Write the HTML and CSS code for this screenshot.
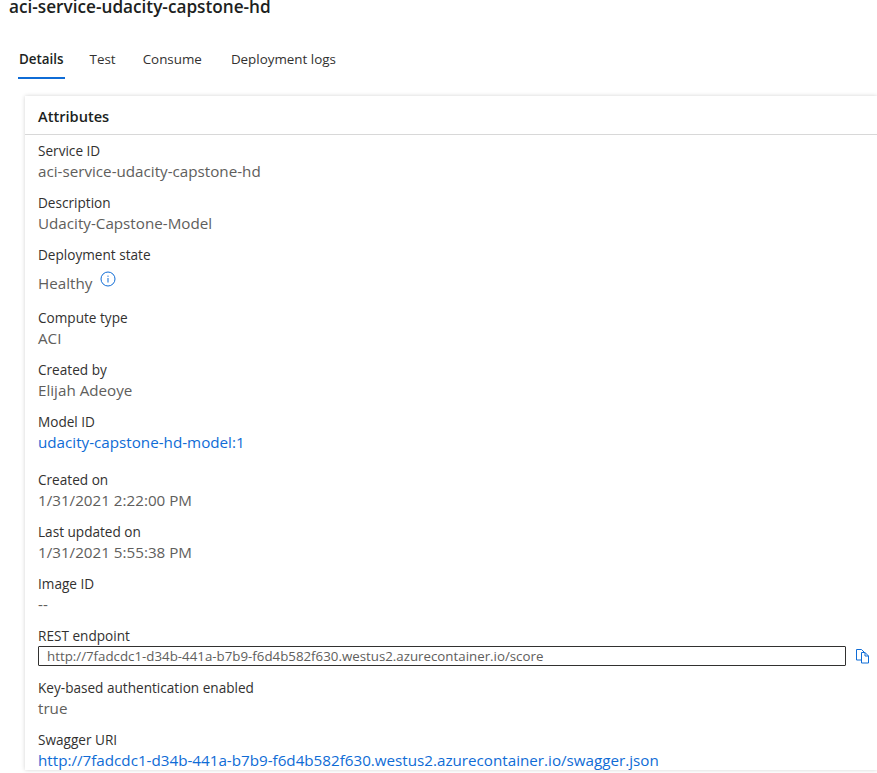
FILE: index.html
```html
<!DOCTYPE html>
<html lang="en">

<head>
    <meta charset="UTF-8">
    <meta name="viewport" content="width=device-width, initial-scale=1.0">
    <title>aci-service-udacity-capstone-hd</title>
    <link rel="stylesheet" href="styles.css">
</head>

<body>
    <h1 class="title">aci-service-udacity-capstone-hd</h1>

    <div class="tabs">
        <a class="tab active">Details</a>
        <a class="tab tab-test">Test</a>
        <a class="tab tab-consume">Consume</a>
        <a class="tab">Deployment logs</a>
    </div>

    <div class="card">
        <div class="card-header">Attributes</div>
        <div class="card-body">
            <div class="field">
                <div class="label">Service ID</div>
                <div class="value">aci-service-udacity-capstone-hd</div>
            </div>
            <div class="field">
                <div class="label">Description</div>
                <div class="value">Udacity-Capstone-Model</div>
            </div>
            <div class="field field-state">
                <div class="label">Deployment state</div>
                <div class="value value-state">
                    Healthy
                    <svg class="info-icon" width="16" height="16" viewBox="0 0 16 16">
                        <circle cx="8" cy="8" r="7" fill="none" stroke="#0f6cd6" stroke-width="1"/>
                        <rect x="7.5" y="7" width="1" height="4.5" fill="#0f6cd6"/>
                        <rect x="7.5" y="4.6" width="1" height="1.2" fill="#0f6cd6"/>
                    </svg>
                </div>
            </div>
            <div class="field">
                <div class="label">Compute type</div>
                <div class="value">ACI</div>
            </div>
            <div class="field">
                <div class="label">Created by</div>
                <div class="value">Elijah Adeoye</div>
            </div>
            <div class="field field-model">
                <div class="label">Model ID</div>
                <div class="value"><a class="link">udacity-capstone-hd-model:1</a></div>
            </div>
            <div class="field">
                <div class="label">Created on</div>
                <div class="value">1/31/2021 2:22:00 PM</div>
            </div>
            <div class="field">
                <div class="label">Last updated on</div>
                <div class="value">1/31/2021 5:55:38 PM</div>
            </div>
            <div class="field">
                <div class="label">Image ID</div>
                <div class="value">--</div>
            </div>
            <div class="field">
                <div class="label">REST endpoint</div>
                <div class="endpoint">
                    <div class="endpoint-box">http://7fadcdc1-d34b-441a-b7b9-f6d4b582f630.westus2.azurecontainer.io/score</div>
                    <svg class="copy-icon" width="16" height="16" viewBox="0 0 16 16" fill="#fff" stroke="#0f6cd6" stroke-width="1">
                        <path d="M1.500 1.500h5l2.500 2.500v8h-7.500z"/>
                        <path d="M6.500 4.500h3.500l3.500 3.500v7h-7z"/>
                        <path d="M10 4.500v3.500h3.500" fill="none"/>
                    </svg>
                </div>
            </div>
            <div class="field">
                <div class="label">Key-based authentication enabled</div>
                <div class="value">true</div>
            </div>
            <div class="field">
                <div class="label">Swagger URI</div>
                <div class="value"><a class="link">http://7fadcdc1-d34b-441a-b7b9-f6d4b582f630.westus2.azurecontainer.io/swagger.json</a></div>
            </div>
        </div>
    </div>
</body>

</html>
```

FILE: styles.css
```css
html, body {
    height: 773px;
    overflow: hidden;
}

body {
    margin: 0;
    padding: 0;
    background: #fff;
    color: #201f1e;
    font-family: 'Open Sans', 'Noto Sans', sans-serif;
    font-size: 13px;
}

.title {
    margin: -4px 0 0 9px;
    font-size: 17.2px;
    line-height: 22px;
    font-weight: 600;
    color: #201f1e;
}

.tabs {
    display: flex;
    margin: 22px 0 0 18px;
    height: 39px;
}

.tab {
    padding: 0 1px;
    line-height: 38px;
    font-size: 13.4px;
    color: #323130;
    margin-right: 24px;
    height: 39px;
    box-sizing: border-box;
}

.tab.active {
    font-weight: 600;
    color: #201f1e;
    border-bottom: 2px solid #0f6cd6;
}

.tab-test {
    margin-right: 25px;
}

.tab-consume {
    margin-right: 27px;
}

.card {
    margin: 17px 0 0 25px;
    background: #fff;
    box-shadow: 0 0 4px rgba(0, 0, 0, 0.18);
}

.card-header {
    height: 38px;
    line-height: 40px;
    padding-left: 13px;
    font-size: 14.6px;
    font-weight: 600;
    color: #201f1e;
    border-bottom: 1px solid #d8d8d8;
}

.card-body {
    padding: 6px 0 0 13px;
}

.field {
    margin-bottom: 12px;
}

.field-state {
    margin-bottom: 13px;
}

.field-model {
    margin-bottom: 18px;
}

.label {
    line-height: 20px;
    font-size: 13.6px;
    font-weight: 500;
    color: #323130;
}

.value {
    line-height: 20px;
    font-size: 15.2px;
    color: #605e5c;
}

.value-state {
    display: flex;
    align-items: flex-start;
    gap: 8px;
    height: 30px;
    padding-top: 8px;
    box-sizing: border-box;
    line-height: 20px;
}

.info-icon {
    margin-top: -2px;
}

.link {
    color: #0f6cd6;
}

.endpoint {
    display: flex;
    align-items: center;
}

.endpoint-box {
    width: 808px;
    height: 20px;
    box-sizing: border-box;
    padding-left: 8px;
    border: 1px solid #323130;
    border-radius: 1px;
    line-height: 19px;
    font-size: 13.3px;
    color: #605e5c;
}

.copy-icon {
    margin-left: 9px;
}
```
